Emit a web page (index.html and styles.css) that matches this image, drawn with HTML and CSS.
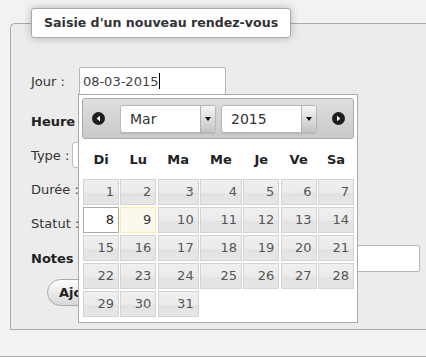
FILE: index.html
```html
<!DOCTYPE html>
<html lang="fr">
<head>
    <meta charset="UTF-8">
    <meta name="viewport" content="width=device-width, initial-scale=1.0">
    <title>Nouveau rendez-vous</title>
    <link rel="stylesheet" href="styles.css">
</head>
<body>

<div class="page">
    <fieldset class="rdv">
        <legend>Saisie d'un nouveau rendez-vous</legend>
        <div class="row">
            <label>Jour :</label>
            <div class="date-input">08-03-2015<span class="caret"></span></div>
        </div>
        <div class="row section heure">Heure</div>
        <div class="row">
            <label>Type :</label>
            <div class="type-select"></div>
        </div>
        <div class="row"><label>Durée :</label></div>
        <div class="row"><label>Statut :</label></div>
        <div class="row section notes">
            <span>Notes</span>
            <div class="notes-input"></div>
        </div>
        <div class="row last">
            <button class="btn">Ajouter</button>
        </div>
    </fieldset>
    <div class="footer"></div>

    <div class="datepicker">
        <div class="dp-header">
            <span class="dp-nav">
                <svg width="13" height="13" viewBox="0 0 13 13"><circle cx="6.5" cy="6.5" r="6.5" fill="#1e1e1e"/><path d="M8 3.8 L4.6 6.5 L8 9.2 Z" fill="#fff"/></svg>
            </span>
            <div class="dp-select month"><span>Mar</span><i class="arrow"></i></div>
            <div class="dp-select year"><span>2015</span><i class="arrow"></i></div>
            <span class="dp-nav">
                <svg width="13" height="13" viewBox="0 0 13 13"><circle cx="6.5" cy="6.5" r="6.5" fill="#1e1e1e"/><path d="M5 3.8 L8.4 6.5 L5 9.2 Z" fill="#fff"/></svg>
            </span>
        </div>
        <div class="dp-days">
            <span>Di</span><span>Lu</span><span>Ma</span><span>Me</span><span>Je</span><span>Ve</span><span>Sa</span>
        </div>
        <div class="dp-grid" id="dp-grid"></div>
    </div>
</div>

<script>
    const grid = document.getElementById('dp-grid');
    for (let d = 1; d <= 31; d++) {
        const cell = document.createElement('a');
        cell.className = 'dp-day';
        if (d === 8) cell.className += ' active';
        if (d === 9) cell.className += ' today';
        cell.textContent = d;
        grid.appendChild(cell);
    }
</script>

</body>
</html>
```

FILE: styles.css
```css
body {
    margin: 0;
    font-family: "DejaVu Sans", sans-serif;
    font-size: 13px;
    color: #222;
    background-color: #f2f2f2;
    overflow: hidden;
}
.page {
    position: relative;
    width: 426px;
    height: 357px;
    padding-top: 8px;
    box-sizing: border-box;
    overflow: hidden;
}
.rdv {
    margin: 0 0 0 10px;
    width: 470px;
    min-width: 0;
    box-sizing: border-box;
    padding: 29px 0 23px 20px;
    border: 1px solid #aaa;
    border-right: none;
    border-radius: 5px 0 0 0;
    background-color: #ececec;
}
.rdv legend {
    padding: 0 12px;
    height: 30px;
    box-sizing: border-box;
    line-height: 28px;
    border: 1px solid #aaa;
    border-radius: 3px;
    background-color: #fff;
    box-shadow: 0 0 8px rgba(0, 0, 0, 0.25);
    font-weight: bold;
    font-size: 12.6px;
    color: #333;
}
.row {
    display: flex;
    align-items: center;
    height: 28px;
    margin-bottom: 6px;
    color: #333;
}
.row.last {
    margin-bottom: 0;
}
.section {
    font-weight: bold;
    color: #222;
}
.heure {
    margin-top: 12px;
}
.notes {
    margin-top: 7px;
}
.date-input {
    display: flex;
    align-items: center;
    margin-left: 14px;
    width: 147px;
    height: 28px;
    box-sizing: border-box;
    padding-left: 3px;
    border: 1px solid #b5b5b5;
    border-radius: 2px;
    background-color: #fff;
    color: #444;
}
.caret {
    display: inline-block;
    width: 1px;
    height: 16px;
    margin-left: 1px;
    background-color: #000;
}
.type-select {
    margin-left: 3px;
    width: 150px;
    height: 26px;
    box-sizing: border-box;
    border: 1px solid #bbb;
    border-radius: 3px;
    background-color: #fff;
}
.notes-input {
    margin-left: 12px;
    width: 334px;
    height: 27px;
    box-sizing: border-box;
    border: 1px solid #b5b5b5;
    border-radius: 2px;
    background-color: #fff;
}
.btn {
    margin-left: 16px;
    height: 27px;
    padding: 0 16px 0 11px;
    border: 1px solid #aaa;
    border-radius: 14px;
    background: linear-gradient(#fdfdfd, #d8d8d8);
    font-family: "DejaVu Sans", sans-serif;
    font-size: 13px;
    font-weight: bold;
    color: #222;
}
.footer {
    margin-top: 26px;
    height: 10px;
    border-top: 1px solid #aaa;
}

.datepicker {
    position: absolute;
    left: 78px;
    top: 94px;
    width: 280px;
    height: 229px;
    box-sizing: border-box;
    padding: 3px;
    border: 1px solid #aaa;
    background-color: #fff;
}
.dp-header {
    display: flex;
    align-items: center;
    height: 41px;
    box-sizing: border-box;
    padding-left: 9px;
    border: 1px solid #aaa;
    border-radius: 3px;
    background: linear-gradient(#dedede, #cacaca);
}
.dp-nav {
    display: flex;
    width: 13px;
    height: 13px;
}
.dp-select {
    display: flex;
    width: 96px;
    height: 28px;
    box-sizing: border-box;
    border: 1px solid #b8b8b8;
    border-radius: 3px;
    background-color: #fff;
    box-shadow: 0 1px 1px rgba(0, 0, 0, 0.12);
    font-size: 14px;
    color: #333;
}
.dp-select span {
    flex: 1;
    padding-left: 9px;
    line-height: 26px;
}
.dp-select .arrow {
    position: relative;
    width: 14px;
    border-left: 1px solid #b0b0b0;
    border-radius: 0 2px 2px 0;
    background: linear-gradient(#f6f6f6, #c4c4c4);
}
.dp-select .arrow::after {
    content: "";
    position: absolute;
    left: 4px;
    top: 11px;
    border-top: 4px solid #111;
    border-left: 3px solid transparent;
    border-right: 3px solid transparent;
}
.month {
    margin-left: 15px;
}
.year {
    margin-left: 5px;
    margin-right: 15px;
}
.dp-days, .dp-grid {
    display: grid;
    grid-template-columns: 36px 36px 41px 42px 36px 36px 36px;
    column-gap: 1.33px;
    margin: 0 1px;
}
.dp-days {
    height: 40px;
    align-items: center;
    text-align: center;
    font-weight: bold;
    color: #222;
}
.dp-grid {
    grid-auto-rows: 26px;
    row-gap: 2px;
}
.dp-day {
    box-sizing: border-box;
    padding-right: 4px;
    line-height: 24px;
    text-align: right;
    border: 1px solid #d3d3d3;
    background: linear-gradient(#efefef 0%, #ebebeb 55%, #e3e3e3 56%, #e6e6e6 100%);
    color: #555;
}
.dp-day.active {
    border-color: #aaa;
    background: #fff;
    color: #212121;
}
.dp-day.today {
    border-color: #fcefa1;
    background: #fbf9ee;
    color: #363636;
}
```
